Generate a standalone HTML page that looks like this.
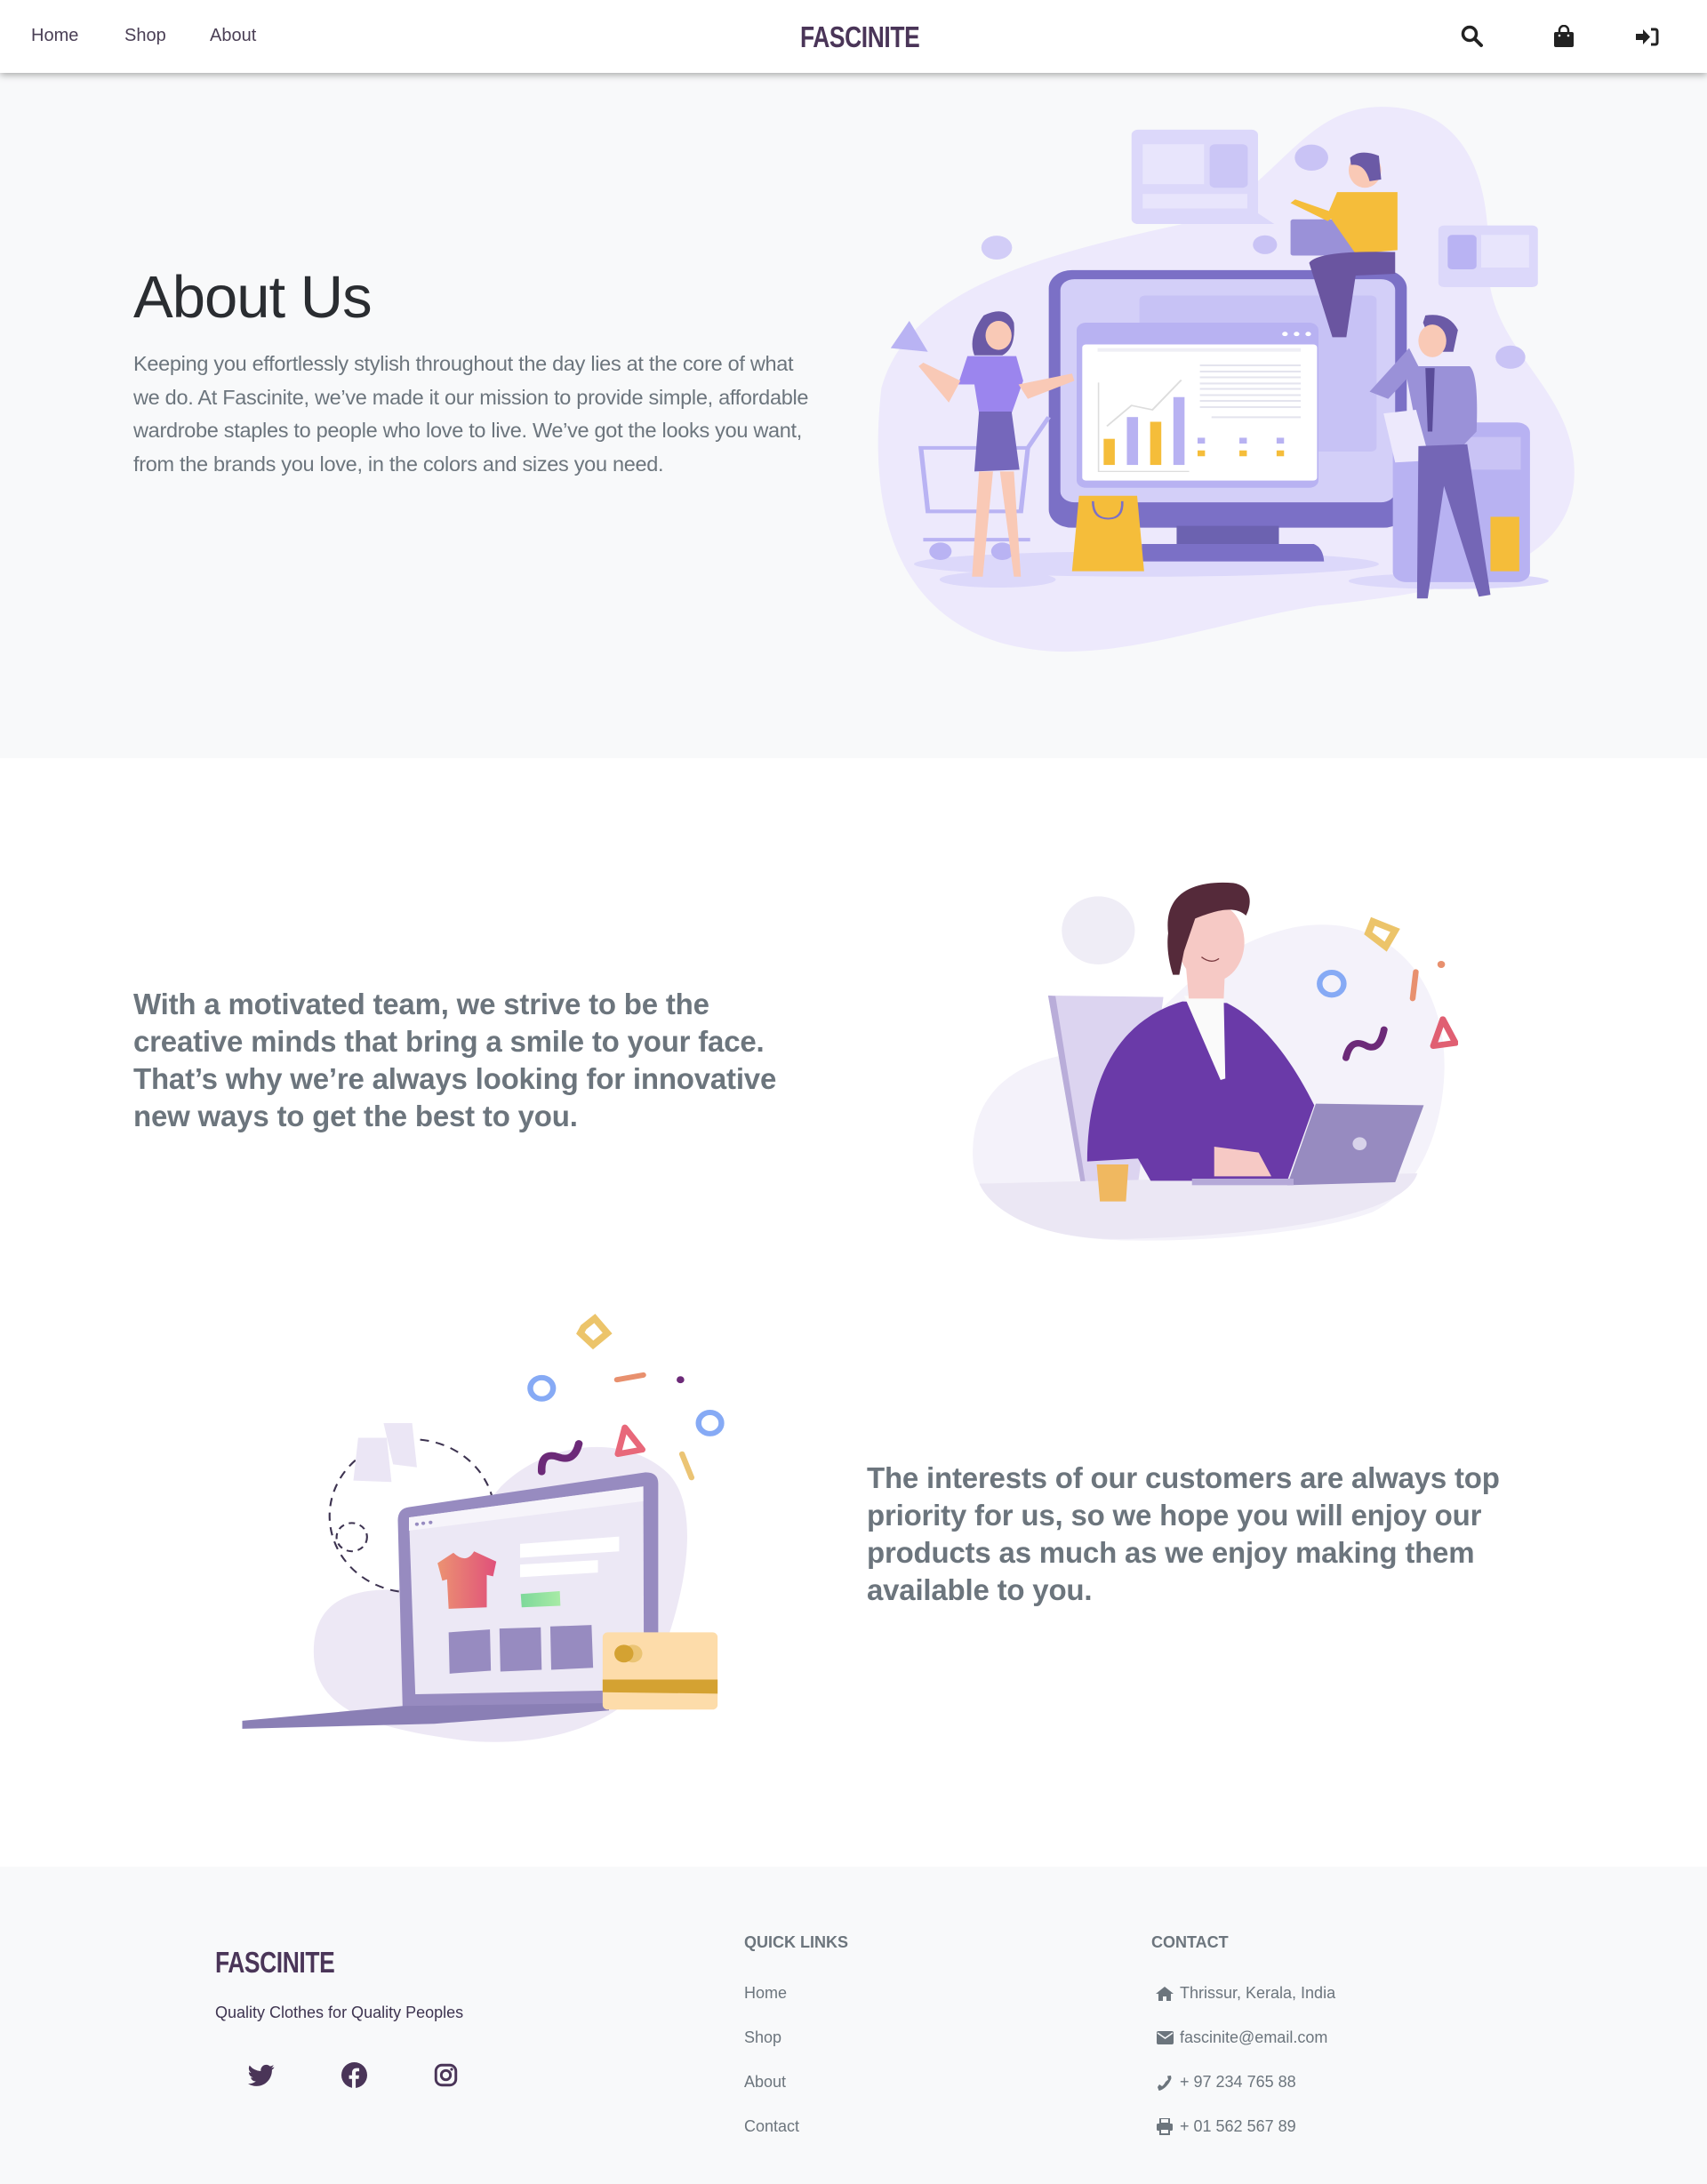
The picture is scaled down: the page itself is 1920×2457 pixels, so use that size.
<!DOCTYPE html>
<html><head><meta charset="utf-8"><style>
*{margin:0;padding:0;box-sizing:border-box}
body{width:1920px;height:2457px;background:#fff;font-family:"Liberation Sans",sans-serif;position:relative;overflow:hidden}
.abs{position:absolute}
nav{position:absolute;left:0;top:0;width:1920px;height:82px;background:#fff;box-shadow:0 2px 8px rgba(0,0,0,.35);z-index:5}
.nl{position:absolute;top:29px;font-size:20px;color:#4a3f55}
.logo{position:absolute;font-weight:bold;color:#4a3558;letter-spacing:-0.5px;transform-origin:left top;white-space:nowrap}
.hero{position:absolute;left:0;top:82px;width:1920px;height:771px;background:#f8f9fa}
.ftr{position:absolute;left:0;top:2100px;width:1920px;height:357px;background:#f8f9fa}
.big{position:absolute;font-weight:bold;font-size:33px;color:#6c757d;line-height:42px;white-space:nowrap;letter-spacing:-0.2px}
.fl{position:absolute;font-size:18px;color:#6c757d;white-space:nowrap}
.fh{position:absolute;font-size:18px;font-weight:bold;color:#6c757d}
</style></head><body>
<nav>
<div class="nl" style="left:35px">Home</div>
<div class="nl" style="left:140px">Shop</div>
<div class="nl" style="left:236px">About</div>
<div class="logo" style="left:900px;top:23px;font-size:33px;transform:scaleX(0.8)">FASCINITE</div>
<svg class="abs" style="left:1643px;top:28px" width="26" height="26" viewBox="0 0 26 26"><circle cx="10" cy="10" r="7.5" fill="none" stroke="#222" stroke-width="3.5"/><path d="M15.5 15.5L23 23" stroke="#222" stroke-width="4" stroke-linecap="round"/></svg>
<svg class="abs" style="left:1748px;top:28px" width="22" height="25" viewBox="0 0 22 25"><path d="M6 9V6a5 5 0 0 1 10 0v3" fill="none" stroke="#222" stroke-width="2.5"/><rect x="0" y="8" width="22" height="17" rx="2" fill="#222"/><circle cx="6" cy="12" r="1.3" fill="#fff"/><circle cx="16" cy="12" r="1.3" fill="#fff"/></svg>
<svg class="abs" style="left:1840px;top:31px" width="26" height="21" viewBox="0 0 26 21"><path d="M0 7h8V2l8 8.5-8 8.5v-5H0z" fill="#222"/><path d="M17 2h5a2 2 0 0 1 2 2v13a2 2 0 0 1-2 2h-5" fill="none" stroke="#222" stroke-width="3"/></svg>
</nav>

<div class="hero"></div>
<div class="abs" style="left:150px;top:296px;font-size:67px;color:#2a2d31;letter-spacing:-1px;font-weight:300">About Us</div>
<div class="abs" style="left:150px;top:391px;font-size:23.5px;color:#6c757d;line-height:37.7px;white-space:nowrap;letter-spacing:-0.3px">Keeping you effortlessly stylish throughout the day lies at the core of what<br>we do. At Fascinite, we’ve made it our mission to provide simple, affordable<br>wardrobe staples to people who love to live. We’ve got the looks you want,<br>from the brands you love, in the colors and sizes you need.</div>

<svg class="abs" style="left:960px;top:110px" width="820" height="640" viewBox="0 0 1568 1568" preserveAspectRatio="none">
<path d="M60,800 C120,520 420,430 700,350 C900,290 950,30 1130,25 C1330,20 1370,250 1365,450 C1360,700 1560,800 1550,1050 C1540,1300 1300,1360 1000,1400 C800,1440 600,1540 420,1525 C150,1500 20,1250 60,800Z" fill="#ede9fc"/>
<rect x="598" y="88" width="272" height="260" rx="14" fill="#dcd8fa"/><path d="M860,310 L905,348 L860,348Z" fill="#dcd8fa"/>
<rect x="622" y="128" width="132" height="110" fill="#e8e5fc"/><rect x="766" y="128" width="82" height="120" rx="12" fill="#cbc6f6"/>
<rect x="622" y="265" width="225" height="40" fill="#e8e5fc"/>
<rect x="1258" y="352" width="214" height="170" rx="12" fill="#dcd8fa"/><rect x="1278" y="378" width="62" height="95" rx="10" fill="#b9b3f3"/><rect x="1350" y="378" width="103" height="90" fill="#e8e5fc"/>
<circle cx="985" cy="165" r="36" fill="#c9c3f5"/><circle cx="885" cy="405" r="26" fill="#c9c3f5"/><circle cx="308" cy="413" r="33" fill="#d2cdf7"/><circle cx="1413" cy="715" r="32" fill="#c9c3f5"/>
<ellipse cx="630" cy="1285" rx="500" ry="35" fill="#dcd8fa"/><ellipse cx="1280" cy="1332" rx="215" ry="22" fill="#dcd8fa"/><ellipse cx="310" cy="1328" rx="125" ry="22" fill="#dcd8fa"/>
<rect x="420" y="475" width="770" height="710" rx="50" fill="#7b70c6"/>
<rect x="445" y="500" width="720" height="615" rx="30" fill="#d3cff8"/>
<rect x="615" y="545" width="510" height="430" rx="12" fill="#c7c2f5"/>
<rect x="695" y="1180" width="220" height="55" fill="#6c62b0"/>
<path d="M620,1230 L990,1230 Q1010,1240 1012,1278 L620,1278Z" fill="#7b70c6"/>
<rect x="480" y="620" width="520" height="455" rx="20" fill="#b8b2f2"/>
<rect x="492" y="680" width="505" height="375" rx="8" fill="#fff"/>
<circle cx="928" cy="651" r="6" fill="#fff"/><circle cx="953" cy="651" r="6" fill="#fff"/><circle cx="978" cy="651" r="6" fill="#fff"/>
<rect x="525" y="690" width="437" height="10" fill="#efeff5"/>
<g fill="#e4e4ee"><rect x="745" y="735" width="217" height="5"/><rect x="745" y="752" width="217" height="5"/><rect x="745" y="768" width="217" height="5"/><rect x="745" y="785" width="217" height="5"/><rect x="745" y="800" width="217" height="5"/><rect x="745" y="817" width="217" height="5"/><rect x="745" y="833" width="217" height="5"/><rect x="745" y="850" width="217" height="5"/><rect x="770" y="878" width="192" height="5"/></g>
<path d="M527,785 V1030 H722" fill="none" stroke="#ddd" stroke-width="3"/>
<path d="M545,905 L598,848 L643,860 L705,778" fill="none" stroke="#ddd" stroke-width="4"/>
<rect x="538" y="940" width="24" height="72" fill="#f5bd3a"/><rect x="588" y="880" width="24" height="132" fill="#b8b2f2"/><rect x="638" y="893" width="24" height="119" fill="#f5bd3a"/><rect x="688" y="825" width="24" height="187" fill="#b8b2f2"/>
<g fill="#b8b2f2"><rect x="740" y="937" width="16" height="16"/><rect x="830" y="937" width="16" height="16"/><rect x="910" y="937" width="16" height="16"/></g>
<g fill="#f5bd3a"><rect x="740" y="972" width="16" height="16"/><rect x="830" y="972" width="16" height="16"/><rect x="910" y="972" width="16" height="16"/></g>
<path d="M485,1097 L610,1097 L625,1305 L470,1305Z" fill="#f5bd3a"/>
<path d="M515,1112 Q515,1160 548,1160 Q580,1160 578,1112" fill="none" stroke="#7b70c6" stroke-width="5"/>
<g fill="none" stroke="#b9b3f3" stroke-width="10"><path d="M145,965 H375 L360,1140 H160Z"/><path d="M375,965 L420,880"/><path d="M150,1218 H380"/></g>
<circle cx="187" cy="1250" r="24" fill="#b9b3f3"/><circle cx="320" cy="1250" r="24" fill="#b9b3f3"/>
<path d="M280,600 Q330,570 345,620 Q350,690 320,710 L260,710 Q245,660 280,600Z" fill="#6b5aa6"/>
<ellipse cx="312" cy="655" rx="28" ry="40" fill="#f9c9b6"/>
<path d="M245,712 L350,712 L365,780 L340,870 L270,870 L260,790 L225,790Z" fill="#9b85ee"/>
<path d="M270,865 L340,865 L357,1025 L260,1030Z" fill="#7567bb"/>
<path d="M270,1030 L300,1030 L278,1320 L255,1320Z M315,1030 L345,1030 L360,1320 L345,1320Z" fill="#f9c9b6"/>
<path d="M230,780 L205,840 L140,740 L150,730Z M355,790 L470,760 L475,780 L375,830Z" fill="#f9c9b6"/>
<path d="M80,690 L120,615 L160,700Z" fill="#b9b3f3"/>
<rect x="940" y="335" width="140" height="100" rx="6" fill="#9a91d8"/>
<path d="M1040,260 L1170,260 L1170,420 L1080,430 L1020,320Z" fill="#f5bd3a"/>
<path d="M950,280 L1040,320 L1020,340 L940,290Z" fill="#f5bd3a"/>
<ellipse cx="1100" cy="200" rx="35" ry="48" fill="#f9c9b6"/><path d="M1068,165 Q1090,140 1130,160 L1135,225 L1110,230 Q1100,180 1070,185Z" fill="#6b5aa6"/>
<path d="M980,455 Q1000,420 1165,425 L1165,485 L1080,490 L1060,660 L1030,660 Z" fill="#6a55a0"/>
<path d="M1230,600 Q1280,590 1300,640 L1290,700 L1250,700 L1225,620Z" fill="#6b5aa6"/>
<ellipse cx="1245" cy="670" rx="30" ry="45" fill="#f9c9b6"/>
<rect x="1160" y="895" width="295" height="440" rx="28" fill="#b8b2f2"/>
<rect x="1310" y="935" width="125" height="90" fill="#c9c3f5"/><rect x="1370" y="1155" width="62" height="150" fill="#f5bd3a"/>
<path d="M1185,740 L1325,740 Q1345,760 1340,920 L1310,960 L1220,970 Z" fill="#9a91d8"/>
<path d="M1110,810 L1195,690 L1215,740 L1150,830Z" fill="#9a91d8"/>
<path d="M1230,745 L1250,745 L1245,920 L1235,920Z" fill="#5a4c99"/>
<path d="M1140,870 L1210,860 L1240,1000 L1165,1005Z" fill="#ede9fc"/>
<path d="M1215,960 L1320,955 L1370,1370 L1345,1375 L1270,1070 L1235,1380 L1212,1380Z" fill="#7466b6"/>
</svg>

<svg class="abs" style="left:1080px;top:970px" width="560" height="440" viewBox="0 0 1568 1320" preserveAspectRatio="none">
<path d="M40,1000 C30,760 200,650 420,640 C600,630 700,300 1050,220 C1350,160 1530,400 1525,700 C1520,900 1450,1100 1300,1180 C1100,1260 700,1285 480,1275 C200,1260 45,1150 40,1000Z" fill="#f4f2fa"/>
<circle cx="435" cy="230" r="115" fill="#efedf6"/>
<path d="M277,450 L640,455 L560,1085 L380,1085Z" fill="#dcd4f0"/>
<path d="M277,450 L300,452 L395,1085 L380,1085Z" fill="#b9add9"/>
<path d="M60,1085 L1440,1050 C1400,1190 1000,1260 500,1272 C250,1272 100,1180 60,1085Z" fill="#ebe7f4"/>
<path d="M400,1010 C400,760 480,540 700,470 L840,475 C960,540 1050,680 1115,820 L1030,1075 L600,1075 L560,1000 Z" fill="#6a3aa8"/>
<path d="M705,450 L830,460 L835,730 L820,735Z" fill="#fafafa"/>
<path d="M710,340 L835,340 L830,460 L720,460Z" fill="#f6c9c5"/>
<ellipse cx="790" cy="270" rx="105" ry="135" fill="#f6c9c5"/>
<path d="M655,240 C640,100 740,60 860,70 C920,80 920,140 900,180 C860,140 790,170 740,190 L705,300 L690,380 L670,380 C655,330 650,280 655,240Z" fill="#552a3a"/>
<path d="M760,320 Q790,345 815,325" stroke="#7a3a40" stroke-width="4" fill="none"/>
<path d="M800,960 L940,980 L980,1060 L800,1060Z" fill="#f6c9c5"/>
<path d="M1120,815 L1460,820 L1370,1080 L1030,1090Z" fill="#978bc0"/>
<rect x="730" y="1068" width="320" height="22" fill="#b5a9d8"/>
<circle cx="1258" cy="950" r="22" fill="#d8d3ea"/>
<path d="M430,1020 L530,1020 L522,1145 L440,1145Z" fill="#f0b860"/>
<path d="M1300,200 L1370,230 L1340,285 L1285,240Z" fill="none" stroke="#ecc46a" stroke-width="22"/>
<circle cx="1170" cy="410" r="38" fill="none" stroke="#86aaf5" stroke-width="18"/>
<path d="M1435,370 L1425,460" stroke="#e8906e" stroke-width="18" stroke-linecap="round"/>
<circle cx="1515" cy="345" r="12" fill="#e8906e"/>
<path d="M1215,660 Q1230,590 1280,620 Q1320,640 1335,565" fill="none" stroke="#6c2a78" stroke-width="22" stroke-linecap="round"/>
<path d="M1520,530 L1560,610 L1490,620Z" fill="none" stroke="#e05f72" stroke-width="20" stroke-linejoin="round"/>
</svg>

<div class="big" style="left:150px;top:1109px">With a motivated team, we strive to be the<br>creative minds that bring a smile to your face.<br>That’s why we’re always looking for innovative<br>new ways to get the best to you.</div>

<svg class="abs" style="left:260px;top:1460px" width="560" height="520" viewBox="0 0 1568 1568" preserveAspectRatio="none">
<path d="M260,1200 C260,1050 350,990 500,990 C650,990 750,760 850,640 C1000,480 1250,460 1380,600 C1480,720 1430,1000 1360,1200 C1270,1470 950,1530 720,1500 C450,1460 260,1400 260,1200Z" fill="#ede8f5"/>
<circle cx="570" cy="740" r="260" fill="none" stroke="#3d3350" stroke-width="6" stroke-dasharray="28 22"/>
<circle cx="380" cy="812" r="48" fill="none" stroke="#3d3350" stroke-width="6" stroke-dasharray="20 16"/>
<path d="M400,475 L490,475 L505,625 L385,620Z M480,425 L570,425 L585,575 L510,565Z" fill="#ebe6f5"/>
<path d="M525,755 Q525,715 560,710 L1305,592 Q1345,592 1345,630 L1345,1385 L540,1395Z" fill="#978bc0"/>
<path d="M560,745 L1298,640 L1300,1330 L580,1345Z" fill="#ece8f5"/>
<path d="M560,745 L1298,640 L1298,690 L560,790Z" fill="#f6f4fa"/>
<circle cx="585" cy="768" r="6" fill="#978bc0"/><circle cx="605" cy="765" r="6" fill="#978bc0"/><circle cx="628" cy="762" r="6" fill="#978bc0"/>
<path d="M35,1435 L540,1385 L1190,1375 L1190,1400 L640,1445 L35,1462Z" fill="#8a7fb5"/>
<defs><linearGradient id="sh" x1="0" x2="1"><stop offset="0" stop-color="#ec9272"/><stop offset="1" stop-color="#e0507a"/></linearGradient><linearGradient id="gr" x1="0" x2="1"><stop offset="0" stop-color="#7dd89a"/><stop offset="1" stop-color="#a8eba6"/></linearGradient></defs>
<path d="M650,900 L700,865 Q740,905 765,860 L835,895 L825,945 L805,940 L805,1050 L685,1055 L680,955 L665,960Z" fill="url(#sh)"/>
<path d="M910,835 L1222,810 L1222,860 L910,882Z M910,905 L1155,890 L1155,932 L910,948Z" fill="#fff"/>
<path d="M912,1005 L1035,995 L1037,1045 L915,1050Z" fill="url(#gr)"/>
<path d="M685,1135 L815,1125 L818,1265 L688,1275Z M845,1122 L975,1118 L978,1262 L848,1268Z M1005,1115 L1135,1110 L1140,1255 L1008,1262Z" fill="#978bc0"/>
<rect x="1170" y="1135" width="362" height="262" rx="16" fill="#fddcaa"/>
<path d="M1170,1295 L1532,1295 L1532,1343 L1170,1338Z" fill="#d4a232"/>
<circle cx="1265" cy="1207" r="30" fill="#ebc474"/><circle cx="1237" cy="1207" r="30" fill="#d4a232"/>
<path d="M1110,100 L1145,70 L1185,120 L1140,160 L1100,120Z" fill="none" stroke="#ecc46a" stroke-width="22"/>
<circle cx="978" cy="307" r="36" fill="none" stroke="#86aaf5" stroke-width="18"/>
<circle cx="1508" cy="425" r="36" fill="none" stroke="#86aaf5" stroke-width="18"/>
<path d="M1215,278 L1298,262" stroke="#e8906e" stroke-width="18" stroke-linecap="round"/>
<circle cx="1415" cy="278" r="12" fill="#6c2a78"/>
<path d="M1420,530 L1450,610" stroke="#ebc474" stroke-width="18" stroke-linecap="round"/>
<path d="M978,590 Q975,520 1030,540 Q1080,560 1095,495" fill="none" stroke="#6c2a78" stroke-width="24" stroke-linecap="round"/>
<path d="M1240,440 L1295,515 L1218,530Z" fill="none" stroke="#e8687a" stroke-width="20" stroke-linejoin="round"/>
</svg>

<div class="big" style="left:975px;top:1642px">The interests of our customers are always top<br>priority for us, so we hope you will enjoy our<br>products as much as we enjoy making them<br>available to you.</div>

<div class="ftr"></div>
<div class="logo" style="left:242px;top:2189px;font-size:33px;transform:scaleX(0.8)">FASCINITE</div>
<div class="abs" style="left:242px;top:2254px;font-size:18px;color:#3e3450;white-space:nowrap">Quality Clothes for Quality Peoples</div>
<svg class="abs" style="left:279px;top:2322px" width="30" height="26" viewBox="0 0 24 20"><path d="M23.6 2.4c-.9.4-1.8.6-2.8.8 1-.6 1.8-1.6 2.1-2.7-1 .6-2 1-3.100 1.2A4.9 4.9 0 0 0 11.5 6 13.9 13.9 0 0 1 1.4.9a4.9 4.9 0 0 0 1.5 6.6c-.8 0-1.6-.3-2.2-.6 0 2.400 1.7 4.400 3.900 4.800-.7.2-1.500.2-2.200.1.6 2 2.400 3.400 4.600 3.400A9.9 9.9 0 0 1 0 17.3 13.9 13.9 0 0 0 7.5 19.5c9 0 14-7.5 14-14v-.6c1-.7 1.8-1.6 2.1-2.5z" fill="#4a3558"/></svg>
<svg class="abs" style="left:384px;top:2320px" width="29" height="29" viewBox="0 0 24 24"><circle cx="12" cy="12" r="12" fill="#4a3558"/><path d="M13.3 24v-8.5h2.8l.4-3.3h-3.2v-2.1c0-1 .3-1.6 1.6-1.6h1.7V5.6c-.3 0-1.3-.1-2.5-.1-2.5 0-4.2 1.5-4.2 4.3v2.4H7.1v3.3h2.8V24z" fill="#f8f9fa"/></svg>
<svg class="abs" style="left:488px;top:2321px" width="27" height="27" viewBox="0 0 24 24"><rect x="2" y="2" width="20" height="20" rx="6" fill="none" stroke="#4a3558" stroke-width="2.6"/><circle cx="12" cy="12" r="4.6" fill="none" stroke="#4a3558" stroke-width="2.6"/><circle cx="17.8" cy="6.2" r="1.4" fill="#4a3558"/></svg>

<div class="fh" style="left:837px;top:2175px">QUICK LINKS</div>
<div class="fl" style="left:837px;top:2232px">Home</div>
<div class="fl" style="left:837px;top:2282px">Shop</div>
<div class="fl" style="left:837px;top:2332px">About</div>
<div class="fl" style="left:837px;top:2382px">Contact</div>

<div class="fh" style="left:1295px;top:2175px">CONTACT</div>
<svg class="abs" style="left:1300px;top:2234px" width="20" height="17" viewBox="0 0 20 17"><path d="M10 1L0 9h3v8h5v-5h4v5h5V9h3z" fill="#6c757d"/></svg>
<div class="fl" style="left:1327px;top:2232px">Thrissur, Kerala, India</div>
<svg class="abs" style="left:1301px;top:2285px" width="19" height="15" viewBox="0 0 19 15"><rect width="19" height="15" rx="2" fill="#6c757d"/><path d="M1 2l8.5 6L18 2" fill="none" stroke="#f8f9fa" stroke-width="1.6"/></svg>
<div class="fl" style="left:1327px;top:2282px">fascinite@email.com</div>
<svg class="abs" style="left:1301px;top:2334px" width="18" height="19" viewBox="0 0 18 19"><path d="M16 1l-4 .5 1 4-3 2.5c-1 2-2.5 4-4 5L3 11 1 14l1.5 4c6-1 12-8 14-14z" fill="#6c757d"/></svg>
<div class="fl" style="left:1327px;top:2332px">+ 97 234 765 88</div>
<svg class="abs" style="left:1301px;top:2383px" width="18" height="19" viewBox="0 0 18 19"><rect x="4" y="0" width="10" height="6" fill="none" stroke="#6c757d" stroke-width="2"/><rect x="0" y="6" width="18" height="8" rx="1.5" fill="#6c757d"/><rect x="4" y="12" width="10" height="6" fill="#f8f9fa" stroke="#6c757d" stroke-width="2"/></svg>
<div class="fl" style="left:1327px;top:2382px">+ 01 562 567 89</div>
</body></html>
